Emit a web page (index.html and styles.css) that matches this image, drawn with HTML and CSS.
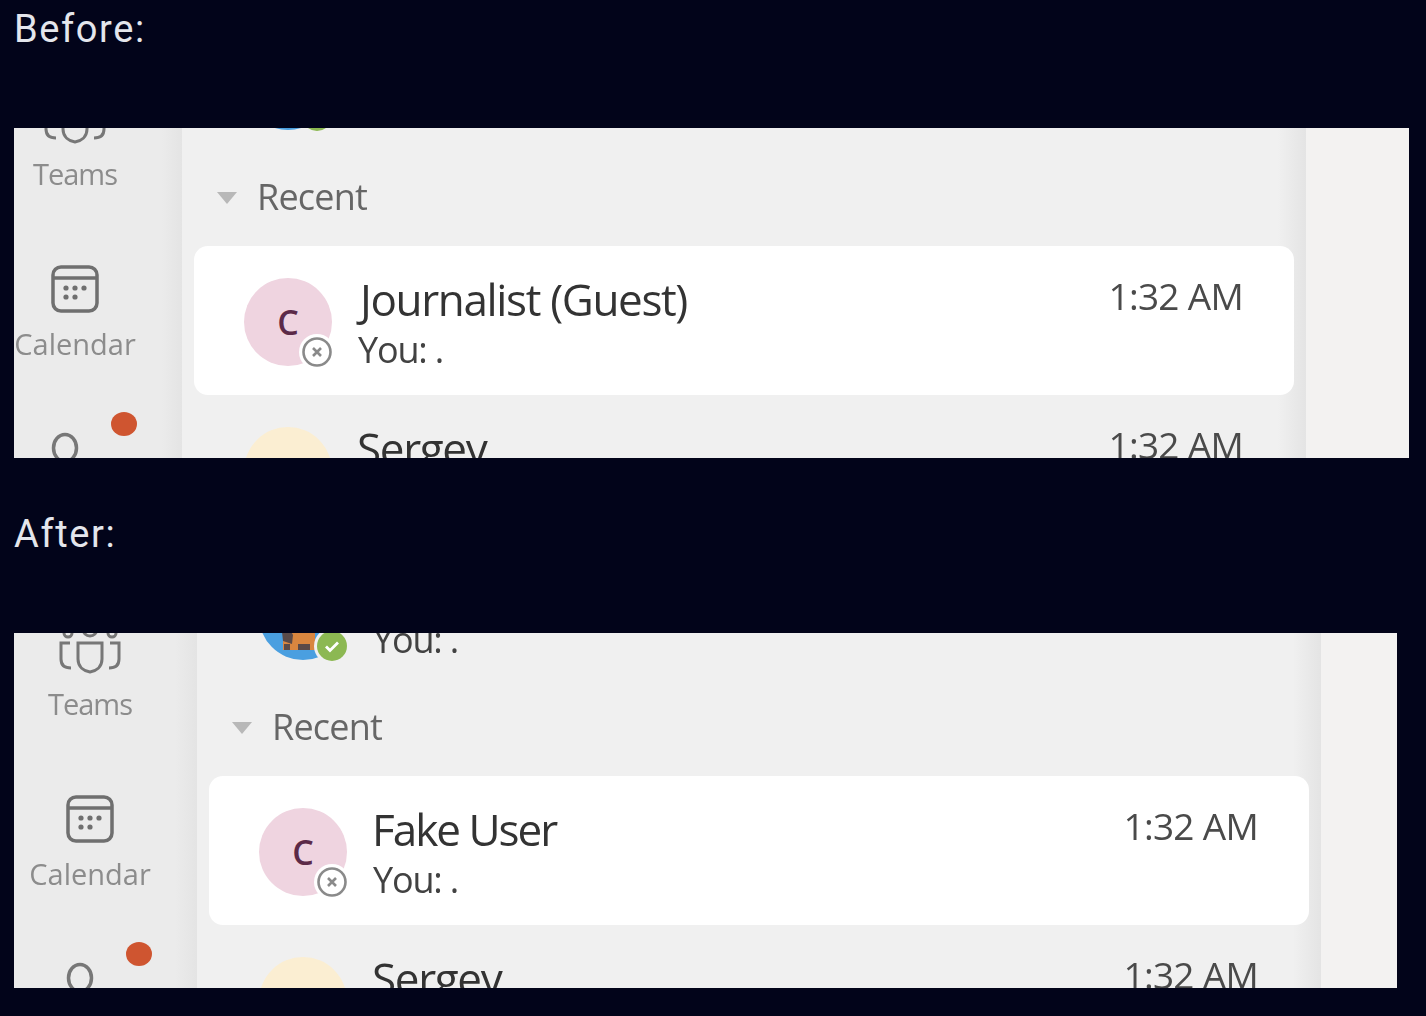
FILE: index.html
```html
<!DOCTYPE html>
<html lang="en">
<head>
  <meta charset="UTF-8">
  <meta name="viewport" content="width=device-width, initial-scale=1.0">
  <title>Before / After</title>
  <link rel="stylesheet" href="styles.css">
</head>
<body>
  <section class="compare">
    <h2 class="label">Before:</h2>
    <div class="shot shot_before">
      <div class="rail">
        <div class="rail_item">
          <svg class="rail_icon" width="64" height="48" viewBox="0 0 64 48"><g fill="none" stroke="#777" stroke-width="3"><circle cx="32" cy="4" r="7"/><circle cx="10" cy="8" r="4"/><circle cx="54" cy="8" r="4"/><path d="M20 18h24v16c0 8-6 12-12 13-6-1-12-5-12-13z"/><path d="M12 18H3v16c0 6 3 9 10 9"/><path d="M52 18h9v16c0 6-3 9-10 9"/></g></svg>
          <span class="rail_text">Teams</span>
        </div>
        <div class="rail_item">
          <svg class="rail_icon" width="48" height="48" viewBox="0 0 48 48"><g fill="none" stroke="#6f6f6f" stroke-width="3.5"><rect x="2" y="2" width="44" height="44" rx="8"/><path d="M2 13h44"/></g><g fill="#6f6f6f"><circle cx="15" cy="23" r="2.6"/><circle cx="24" cy="23" r="2.6"/><circle cx="33" cy="23" r="2.6"/><circle cx="15" cy="32" r="2.6"/><circle cx="24" cy="32" r="2.6"/></g></svg>
          <span class="rail_text rail_text_wide">Calendar</span>
        </div>
        <div class="rail_item rail_item_alert">
          <svg class="rail_icon" width="48" height="48" viewBox="0 0 48 48"><ellipse cx="14" cy="15" rx="11.5" ry="13.5" fill="none" stroke="#777" stroke-width="3.5"/></svg>
          <span class="dot"></span>
        </div>
      </div>
      <div class="list">
        <div class="row">
          <div class="avatar avatar_blue">
            <svg width="88" height="88" viewBox="0 0 88 88"><circle cx="44" cy="44" r="44" fill="#4a9fe0"/><path d="M24 56h32v22H24z" fill="#d9863f"/><path d="M23 60c4-4 9-2 11 3l-1 9-9-3zM25 72h6v6h-6zM39 72h12v6H39z" fill="#5a4a48"/></svg>
            <span class="status status_ok"><svg width="30" height="30" viewBox="0 0 30 30"><circle cx="15" cy="15" r="15" fill="#8cb852"/><path d="M9 15.5l4 4 8-8" fill="none" stroke="#fff" stroke-width="2.8"/></svg></span>
          </div>
        </div>
        <div class="group_head"><span class="caret"></span><span class="group_name">Recent</span></div>
        <div class="row row_active">
          <div class="avatar avatar_pink">C
            <span class="status"><svg width="30" height="30" viewBox="0 0 30 30"><circle cx="15" cy="15" r="13.5" fill="#fff" stroke="#8a8a8a" stroke-width="2.6"/><path d="M11 11l8 8M19 11l-8 8" stroke="#8a8a8a" stroke-width="2.6"/></svg></span>
          </div>
          <div class="row_text">
            <p class="name name_long">Journalist (Guest)</p>
            <p class="preview">You: .</p>
          </div>
          <span class="time">1:32 AM</span>
        </div>
        <div class="row">
          <div class="avatar avatar_cream"></div>
          <div class="row_text">
            <p class="name">Sergey</p>
          </div>
          <span class="time">1:32 AM</span>
        </div>
      </div>
      <div class="side"></div>
    </div>
  </section>

  <section class="compare compare_after">
    <h2 class="label">After:</h2>
    <div class="shot shot_after">
      <div class="rail">
        <div class="rail_item">
          <svg class="rail_icon" width="64" height="48" viewBox="0 0 64 48"><g fill="none" stroke="#777" stroke-width="3"><circle cx="32" cy="4" r="7"/><circle cx="10" cy="8" r="4"/><circle cx="54" cy="8" r="4"/><path d="M20 18h24v16c0 8-6 12-12 13-6-1-12-5-12-13z"/><path d="M12 18H3v16c0 6 3 9 10 9"/><path d="M52 18h9v16c0 6-3 9-10 9"/></g></svg>
          <span class="rail_text">Teams</span>
        </div>
        <div class="rail_item">
          <svg class="rail_icon" width="48" height="48" viewBox="0 0 48 48"><g fill="none" stroke="#6f6f6f" stroke-width="3.5"><rect x="2" y="2" width="44" height="44" rx="8"/><path d="M2 13h44"/></g><g fill="#6f6f6f"><circle cx="15" cy="23" r="2.6"/><circle cx="24" cy="23" r="2.6"/><circle cx="33" cy="23" r="2.6"/><circle cx="15" cy="32" r="2.6"/><circle cx="24" cy="32" r="2.6"/></g></svg>
          <span class="rail_text rail_text_wide">Calendar</span>
        </div>
        <div class="rail_item rail_item_alert">
          <svg class="rail_icon" width="48" height="48" viewBox="0 0 48 48"><ellipse cx="14" cy="15" rx="11.5" ry="13.5" fill="none" stroke="#777" stroke-width="3.5"/></svg>
          <span class="dot"></span>
        </div>
      </div>
      <div class="list">
        <div class="row">
          <div class="avatar avatar_blue">
            <svg width="88" height="88" viewBox="0 0 88 88"><circle cx="44" cy="44" r="44" fill="#4a9fe0"/><path d="M24 56h32v22H24z" fill="#d9863f"/><path d="M23 60c4-4 9-2 11 3l-1 9-9-3zM25 72h6v6h-6zM39 72h12v6H39z" fill="#5a4a48"/></svg>
            <span class="status status_ok"><svg width="30" height="30" viewBox="0 0 30 30"><circle cx="15" cy="15" r="15" fill="#8cb852"/><path d="M9 15.5l4 4 8-8" fill="none" stroke="#fff" stroke-width="2.8"/></svg></span>
          </div>
          <div class="row_text">
            <p class="preview preview_only">You: .</p>
          </div>
        </div>
        <div class="group_head"><span class="caret"></span><span class="group_name">Recent</span></div>
        <div class="row row_active">
          <div class="avatar avatar_pink">C
            <span class="status"><svg width="30" height="30" viewBox="0 0 30 30"><circle cx="15" cy="15" r="13.5" fill="#fff" stroke="#8a8a8a" stroke-width="2.6"/><path d="M11 11l8 8M19 11l-8 8" stroke="#8a8a8a" stroke-width="2.6"/></svg></span>
          </div>
          <div class="row_text">
            <p class="name name_short">Fake User</p>
            <p class="preview">You: .</p>
          </div>
          <span class="time">1:32 AM</span>
        </div>
        <div class="row">
          <div class="avatar avatar_cream"></div>
          <div class="row_text">
            <p class="name">Sergey</p>
          </div>
          <span class="time">1:32 AM</span>
        </div>
      </div>
      <div class="side"></div>
    </div>
  </section>
</body>
</html>
```

FILE: styles.css
```css
*{
  margin: 0;
  padding: 0;
  box-sizing: border-box;
}

html{
  height: 100%;
  overflow: hidden;
}

body{
  height: 1016px;
  padding: 0 14px;
  background: #02041a;
  font-family: "Open Sans", "Noto Sans", sans-serif;
}

.compare_after{
  margin-top: 47px;
}

.label{
  height: 128px;
  font-family: Roboto, "Liberation Sans", sans-serif;
  font-size: 38px;
  font-weight: 400;
  line-height: 58px;
  letter-spacing: 1.6px;
  color: #e4e6ec;
}

.shot{
  display: flex;
  overflow: hidden;
  height: 330px;
  width: 1395px;
  background: #f3f2f1;
}

.shot_after{
  height: 355px;
  width: 1383px;
}

/* left rail */
.rail{
  flex: none;
  width: 168px;
  height: 500px;
  margin-top: -33px;
  padding-right: 46px;
  background: linear-gradient(to right, #ebebeb 88%, #e4e4e4 100%);
}

.shot_after .rail{
  width: 183px;
  margin-top: -8px;
  padding-left: 15px;
}

.rail_item{
  position: relative;
  display: flex;
  flex-direction: column;
  align-items: center;
  height: 170px;
}

.rail_icon{
  flex: none;
  height: 48px;
  overflow: visible;
  filter: blur(0.4px);
}

.rail_text{
  margin-top: 11px;
  font-size: 29px;
  line-height: 40px;
  letter-spacing: -1px;
  color: #8c8c8c;
  filter: blur(0.6px);
}

.rail_text_wide{
  letter-spacing: 0;
}

.rail_item_alert .rail_icon{
  margin-top: -2px;
}

.dot{
  position: absolute;
  top: -23px;
  left: 97px;
  width: 26px;
  height: 24px;
  border-radius: 50%;
  background: #cf5530;
}

/* chat list */
.list{
  flex: none;
  width: 1124px;
  height: 700px;
  margin-top: -122px;
  padding: 0 12px;
  background: linear-gradient(to right, #f0f0f0 97.5%, #e4e4e4 100%);
}

.shot_after .list{
  margin-top: -97px;
}

.row{
  display: flex;
  align-items: flex-start;
  height: 149px;
  padding: 32px 51px 0 50px;
  border-radius: 14px;
}

.row_active{
  background: #fff;
}

.avatar{
  position: relative;
  flex: none;
  width: 88px;
  height: 88px;
  border-radius: 50%;
  display: flex;
  justify-content: center;
  align-items: center;
  font-size: 34px;
  font-weight: 600;
  color: #5c2a48;
}

.avatar_blue{
  margin-top: 4px;
}

.avatar_pink{
  background: #efd4e0;
}

.avatar_cream{
  background: #fbeed2;
  filter: blur(0.6px);
}

.status{
  position: absolute;
  left: 55px;
  top: 56px;
  width: 36px;
  height: 36px;
  display: flex;
  justify-content: center;
  align-items: center;
  border-radius: 50%;
  background: #fff;
}

.status_ok{
  background: #f0f0f0;
}

.row_text{
  flex: 1;
  margin-left: 26px;
  margin-top: -4px;
}

.name{
  margin-left: -1px;
  font-size: 44px;
  line-height: 50px;
  letter-spacing: -1.35px;
  color: #333;
  filter: blur(0.5px);
}

.name_long{
  margin-left: 2px;
}

.name_short{
  letter-spacing: -2px;
}

.preview{
  margin-top: 1px;
  font-size: 36px;
  line-height: 50px;
  letter-spacing: -1.2px;
  color: #424242;
  filter: blur(0.5px);
}

.preview_only{
  margin-top: 51px;
}

.time{
  margin-top: -7px;
  font-size: 37px;
  line-height: 50px;
  letter-spacing: -0.7px;
  color: #4a4a4a;
  filter: blur(0.5px);
}

.group_head{
  display: flex;
  align-items: center;
  height: 91px;
  padding: 0 0 8px 23px;
}

.caret{
  width: 0;
  height: 0;
  margin-top: 2px;
  border-left: 10px solid transparent;
  border-right: 10px solid transparent;
  border-top: 12px solid #b8b8b8;
}

.group_name{
  margin-left: 20px;
  font-size: 36px;
  line-height: 50px;
  letter-spacing: -0.8px;
  color: #666;
  filter: blur(0.5px);
}

.side{
  flex: 1;
  background: #f3f2f1;
}
```
